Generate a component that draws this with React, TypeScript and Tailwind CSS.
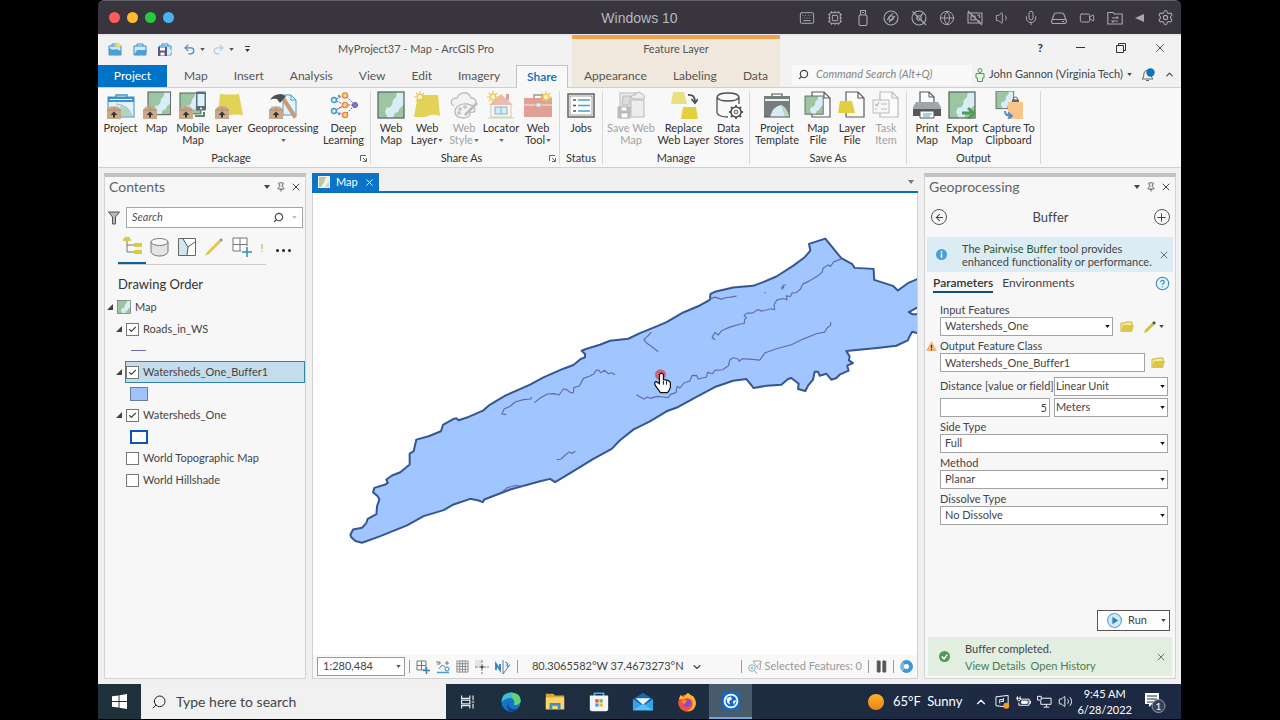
import { ReactNode, useState } from "react";
import {
    ArrowLeft, Check, ChevronDown, ChevronUp, CircleHelp, Cpu, Globe, Keyboard,
    Mic, Pause, Pin, Plus, Search, Settings, Undo2, Redo2, Video, Volume1, Volume2, X,
} from "lucide-react";

const Caret = (props: { className?: string, small?: boolean }) => (
    <svg viewBox="0 0 6 4" className={`shrink-0 ${props.small ? "w-[5px] h-[3px]" : "w-[6px] h-[4px]"} ${props.className ?? "text-[#444]"}`}>
        <path d="M0 0h6L3 4z" fill="currentColor" />
    </svg>
)

/* ---------- ribbon drawings, all on a 28 unit grid ---------- */

const MapArt = (props: { x?: number, y?: number, s?: number }) => (
    <g transform={`translate(${props.x ?? 1} ${props.y ?? 1}) scale(${props.s ?? 1})`}>
        <rect width="26" height="26" fill="#d9edf7" />
        <path d="M0 0H19L18 5L15 8L14 13L11 16L9 15L7 20L10 26H0Z" fill="#9cc5a1" />
        <path d="M26 13V26H15L17 21L20 20L22 16Z" fill="#9cc5a1" />
        <rect width="26" height="26" fill="none" stroke="#5c6b66" strokeWidth="1.3" />
    </g>
)

const Box = () => (
    <g>
        <path d="M0 19L3 15.500H11L14 19V28H0Z" fill="#c9a98a" />
        <path d="M0 19H14M7 15.500V19" stroke="#a98662" strokeWidth=".8" />
        <path d="M7 20.500L10.300 24H8V26.500H6V24H3.700Z" fill="#333" />
    </g>
)

const Page = (props: { x: number, color?: string }) => (
    <path d={`M${props.x} 1H${props.x + 12}L${props.x + 18} 7V26H${props.x}ZM${props.x + 12} 1V7H${props.x + 18}`} fill="#fbfbfb" stroke={props.color ?? "#5d5d5d"} strokeWidth="1.200" />
)

const Sun = (props: { x: number, y: number }) => (
    <g transform={`translate(${props.x} ${props.y})`} stroke="#e8c95c" strokeWidth="1.200">
        <path d="M0 -6V6M-6 0H6M-4.200 -4.200L4.200 4.200M-4.200 4.200L4.200 -4.200" />
        <circle r="2.800" fill="#fdf3bf" />
    </g>
)

const art: Record<string, ReactNode> = {
    project: <>
        <path d="M9 6V4H20V6" fill="none" stroke="#4a90c2" strokeWidth="1.500" />
        <rect x="1" y="6" width="26" height="20" fill="#e4f3fa" stroke="#3c8fc6" />
        <path d="M1 6H27V11H1Z" fill="#3e92ca" /><path d="M3 8.500H25" stroke="#fff" />
        <path d="M13 15Q21 16 24 25H14Z" fill="#b5d6b5" /><path d="M9 13Q21 14 25 25" fill="none" stroke="#9cc9e0" strokeWidth="1.500" />
        <Box />
    </>,
    map: <><MapArt x={5} y={1} s={0.87} /><Box /></>,
    mobile: <>
        <MapArt x={1} y={2} s={0.8} /><path d="M16 25H25V21" fill="none" stroke="#5c8a61" strokeWidth="2" />
        <rect x="17" y="0.500" width="10" height="19" rx="1" fill="#5d6c79" /><rect x="18.500" y="3" width="7" height="12" fill="#dff1fb" />
        <circle cx="22" cy="17.500" r="1" fill="#fff" /><Box />
    </>,
    layer: <><path d="M5 3Q15 4 24 3L28 24Q22 23 16 24H3Z" fill="#e2d257" /><Box /></>,
    geo: <>
        <path d="M14 4H22L27 9V24H14ZM22 4V9H27" fill="#e2f3fb" stroke="#4b9bcb" />
        <path d="M12 8L15 5L28 25L25 28Z" fill="#c89b78" />
        <path d="M1 9Q4 3 12 3L17 5L11 12L8 8Q4 7 1 9Z" fill="#4b4f52" /><Box />
    </>,
    deep: <>
        <g stroke="#7560b5" strokeWidth="1" fill="none"><path d="M4 9L15 4L25 14L15 24L4 20L15 14L4 9M15 14H25M4 20L15 14" strokeDasharray="2 1" /></g>
        <g fill="#d3eef7" stroke="#3e9cc5" strokeWidth="1.400"><circle cx="4" cy="9" r="2.500" /><circle cx="4" cy="20" r="2.500" /></g>
        <g fill="#fbd089" stroke="#e7893c" strokeWidth="1.400"><circle cx="15" cy="4.500" r="2.600" /><circle cx="15" cy="14" r="2.600" /><circle cx="15" cy="24" r="2.600" /></g>
        <circle cx="25" cy="14" r="2.500" fill="#8d72cf" stroke="#6e4fb0" />
        <circle cx="9" cy="5" r="1" fill="#4f61a5" /><circle cx="9" cy="23" r="1" fill="#4f61a5" />
    </>,
    webMap: <MapArt />,
    webLayer: <><path d="M5 4H25L27 25Q20 22 12 26H1Z" fill="#e2d257" /><Sun x={7} y={6} /></>,
    webStyle: <g fill="#f3f3f3" stroke="#bcbcbc" strokeWidth="1.300">
        <path d="M4 15Q-1 12 3 8Q6 7 7 7Q9 1 16 2Q20 3 21 7Q27 7 26 13L24 15" />
        <path d="M5 19Q8 12 17 13Q26 15 25 20Q23 22 20 21Q21 26 14 27Q4 27 5 19Z" /><path d="M27 12L15 24" strokeWidth="2.500" />
        <circle cx="10" cy="18" r="1.200" /><circle cx="15" cy="16" r="1.200" /><circle cx="9" cy="22" r="1.200" />
    </g>,
    locator: <>
        <path d="M19 3H22V9H19Z" fill="#d8a294" /><rect x="4" y="13" width="20" height="13" fill="#fdf6ee" stroke="#d6c6b8" />
        <path d="M2 14L14 3L26 14Z" fill="#ebbcae" /><rect x="8" y="16" width="12" height="7" fill="#d5edf7" stroke="#7fb5cc" /><path d="M14 16V23" stroke="#7fb5cc" />
        <path d="M1 27H27" stroke="#b8d8b0" /><Sun x={6} y={6} />
    </>,
    webTool: <>
        <path d="M10 7V4H18V7" fill="none" stroke="#999" strokeWidth="1.500" /><rect y="7" width="28" height="19" fill="#dfa196" />
        <path d="M0 14H28" stroke="#efd2cc" strokeWidth="1.500" /><rect x="12" y="12" width="5" height="4" fill="#eee" stroke="#aaa" strokeWidth=".8" /><Sun x={22} y={6} />
    </>,
    jobs: <>
        <rect x="1" y="3" width="26" height="23" fill="#fff" stroke="#565656" strokeWidth="1.400" /><rect x="3" y="5" width="22" height="19" fill="none" stroke="#888" strokeWidth=".8" />
        <path d="M6 9H9M6 14.500H9M6 20H9" stroke="#555" strokeWidth="1.500" /><path d="M11 9H23M11 14.500H23M11 20H23" stroke="#48a0d2" strokeWidth="1.500" />
    </>,
    saveWeb: <g fill="#ededed" stroke="#b9b9b9">
        <rect x="3" y="2" width="18" height="19" /><path d="M14 9H27V26H14Z" /><path d="M16 8Q12 4 18 4Q21 -1 25 3Q29 4 27 8Z" />
        <path d="M6 5H14L12 14H5Z" fill="#dcdcdc" /><rect x="1" y="16" width="12" height="11" fill="#bbb" /><rect x="4" y="16" width="6" height="4" fill="#fff" /><rect x="4" y="22" width="7" height="5" fill="#fff" />
    </g>,
    replace: <>
        <path d="M3 1H14L17 13H1Z" fill="#e9e083" /><path d="M13 16H26L28 28H11Z" fill="#e2d03f" />
        <path d="M18 4Q25 3 25 11M21.500 8L25 12L28 8" fill="none" stroke="#4a5258" strokeWidth="1.800" />
    </>,
    stores: <>
        <path d="M2 6V22Q4 26 13 26M24 6V13M2 6Q3 2 13 2T24 6Q23 10 13 10T2 6" fill="none" stroke="#505050" strokeWidth="1.300" />
        <circle cx="21" cy="21" r="5" fill="#f8f8f8" stroke="#505050" strokeWidth="1.500" /><circle cx="21" cy="21" r="1.800" fill="none" stroke="#505050" />
        <path d="M21 14V16M21 26V28M14 21H16M26 21H28M16 16L17.500 17.500M24.500 24.500L26 26M26 16L24.500 17.500M17.500 24.500L16 26" stroke="#505050" strokeWidth="1.800" />
    </>,
    template: <>
        <path d="M9 5V3H19V5" fill="none" stroke="#555" strokeWidth="1.200" /><rect x="1" y="5" width="26" height="21" fill="#777c7e" /><path d="M2 9H26" stroke="#f0f0f0" strokeWidth="2" />
        <path d="M7 26Q10 15 18 14Q24 16 26 26Z" fill="#d6edf7" /><path d="M18 14Q24 17 26 26H22Z" fill="#b9dab1" /><path d="M1 26H27" stroke="#555" />
    </>,
    mapFile: <><Page x={8} /><MapArt x={1} y={5} s={0.7} /></>,
    layerFile: <><Page x={8} /><path d="M2 10H14L17 22H0Z" fill="#e2cf3c" /></>,
    task: <><Page x={8} color="#bbb" /><rect x="1" y="9" width="16" height="13" fill="#f6f6f6" stroke="#bbb" /><path d="M3 13L5 15L7 11M9 13H15M3 18H5M9 18H15" fill="none" stroke="#bbb" strokeWidth="1.200" /></>,
    print: <>
        <path d="M7 13V1H16L21 6V13" fill="#fff" stroke="#555" strokeWidth="1.200" /><path d="M16 1V6H21" fill="none" stroke="#555" />
        <path d="M3 11H25L28 16V18H0V16Z" fill="#a2a5a7" /><rect y="18" width="28" height="7" fill="#55595b" />
        <path d="M7 20H21V27H7Z" fill="#fff" stroke="#555" /><path d="M10 23H19M10 25H17" stroke="#48a0d2" />
    </>,
    exportMap: <><MapArt /><path d="M14 22H23M20 17L26 22.500L20 28" fill="none" stroke="#4d9d55" strokeWidth="2.800" /></>,
    capture: <>
        <MapArt x={1} y={0} s={0.68} /><rect x="13" y="11" width="15" height="17" fill="#f9c58d" />
        <path d="M17 11V8.500H24V11Z" fill="#666" /><circle cx="20.500" cy="8" r="2" fill="none" stroke="#666" />
        <path d="M10 20Q10 25 16 25M13 21.500L17 25L13 28" fill="none" stroke="#3f8fd0" strokeWidth="1.800" />
    </>,
}

type Tool = { icon: string, label: string[], width: string, caret?: "inline" | "below", off?: boolean }

const groups: { name: string, pad: string, launcher?: boolean, tools: Tool[] }[] = [
    { name: "Package", pad: "pl-[4px] pr-[3px]", launcher: true, tools: [
        { icon: "project", label: ["Project"], width: "w-[37px]" },
        { icon: "map", label: ["Map"], width: "w-[35px]" },
        { icon: "mobile", label: ["Mobile", "Map"], width: "w-[38px]" },
        { icon: "layer", label: ["Layer"], width: "w-[34px]" },
        { icon: "geo", label: ["Geoprocessing"], width: "w-[74px]", caret: "below" },
        { icon: "deep", label: ["Deep", "Learning"], width: "w-[47px]" },
    ] },
    { name: "Share As", pad: "px-[3px]", launcher: true, tools: [
        { icon: "webMap", label: ["Web", "Map"], width: "w-[34px]" },
        { icon: "webLayer", label: ["Web", "Layer"], width: "w-[38px]", caret: "inline" },
        { icon: "webStyle", label: ["Web", "Style"], width: "w-[36px]", caret: "inline", off: true },
        { icon: "locator", label: ["Locator"], width: "w-[38px]", caret: "below" },
        { icon: "webTool", label: ["Web", "Tool"], width: "w-[36px]", caret: "inline" },
    ] },
    { name: "Status", pad: "px-[3px]", tools: [{ icon: "jobs", label: ["Jobs"], width: "w-[36px]" }] },
    { name: "Manage", pad: "px-[3px]", tools: [
        { icon: "saveWeb", label: ["Save Web", "Map"], width: "w-[50px]", off: true },
        { icon: "replace", label: ["Replace", "Web Layer"], width: "w-[55px]" },
        { icon: "stores", label: ["Data", "Stores"], width: "w-[35px]" },
    ] },
    { name: "Save As", pad: "px-[3px]", tools: [
        { icon: "template", label: ["Project", "Template"], width: "w-[48px]" },
        { icon: "mapFile", label: ["Map", "File"], width: "w-[34px]" },
        { icon: "layerFile", label: ["Layer", "File"], width: "w-[34px]" },
        { icon: "task", label: ["Task", "Item"], width: "w-[34px]", off: true },
    ] },
    { name: "Output", pad: "px-[3px]", tools: [
        { icon: "print", label: ["Print", "Map"], width: "w-[34px]" },
        { icon: "exportMap", label: ["Export", "Map"], width: "w-[36px]" },
        { icon: "capture", label: ["Capture To", "Clipboard"], width: "w-[57px]" },
    ] },
]

const Ribbon = () => (
    <div className="flex h-[81px] shrink-0 border-y border-[#cfcfcf] bg-[#f8f8f8] text-[11px] text-[#333]">
        {groups.map(g => (
            <section key={g.name} aria-label={g.name} className={`flex flex-col justify-between border-r border-[#d8d8d8] my-[3px] ${g.pad}`}>
                <div className="flex">
                    {g.tools.map(tool => (
                        <button key={tool.icon} className={`flex flex-col items-center leading-[12px] whitespace-nowrap ${tool.width} ${tool.off ? "text-[#a3a3a3]" : ""}`}>
                            <svg viewBox="0 0 28 28" className="size-[28px] shrink-0 mb-[3px]">{art[tool.icon]}</svg>
                            {tool.label.map((line, i) => (
                                <span key={line} className="flex items-center gap-[1px]">
                                    {line}
                                    {tool.caret === "inline" && i === 1 && <Caret small className="text-[#666]" />}
                                </span>
                            ))}
                            {tool.caret === "below" && <Caret small className="text-[#666] mt-[5px]" />}
                        </button>
                    ))}
                </div>
                <div className="flex items-center leading-[12px]">
                    <span className="flex-1 text-center">{g.name}</span>
                    {g.launcher && <svg viewBox="0 0 7 7" className="size-[7px]"><path d="M.5 6V.5H6M3 3L6 6M6.500 3V6.500H3" fill="none" stroke="#666" /></svg>}
                </div>
            </section>
        ))}
    </div>
)

/* ---------- window chrome ---------- */

const Line = (props: { children: ReactNode }) => (
    <svg viewBox="0 0 16 16" className="size-[16px]" fill="none" stroke="currentColor" strokeWidth="1.100">{props.children}</svg>
)

const vmIcons: { n: string, icon: ReactNode }[] = [
    { n: "Keyboard", icon: <Keyboard size={16} strokeWidth={1.500} /> },
    { n: "Processor", icon: <Cpu size={16} strokeWidth={1.500} /> },
    { n: "USB", icon: <Line><rect x="4" y="5" width="8" height="10.500" rx="1.500" /><path d="M5.500 5V.5H10.500V5M7 2.500H9" /></Line> },
    { n: "Disc", icon: <Line><circle cx="8" cy="8" r="7" /><circle cx="8" cy="8" r="2.200" /><path d="M4 10L10 3M6 12L12 6" /></Line> },
    { n: "Second disc", icon: <Line><circle cx="8" cy="8" r="7" /><circle cx="8" cy="8" r="2.200" /><path d="M1.500 1.500L15 15M9.500 6L12 3.500" /></Line> },
    { n: "Network", icon: <Globe size={16} strokeWidth={1.500} /> },
    { n: "Display", icon: <Line><path d="M1 3H15V13H1ZM4 6H8V10H4ZM10 5H12.500V8M10 11H13M1 1L15 15" /></Line> },
    { n: "Sound", icon: <Volume1 size={16} strokeWidth={1.500} /> },
    { n: "Microphone", icon: <Mic size={16} strokeWidth={1.500} /> },
    { n: "Hard disk", icon: <Line><path d="M1 10L3 4.500Q3.500 3 5 3H11Q12.500 3 13 4.500L15 10M2 9.500H14Q15.500 9.500 15.500 11T14 13.500H2Q.5 13.500 .5 11.500T2 9.500ZM11 11.500H13" /></Line> },
    { n: "Camera", icon: <Video size={16} strokeWidth={1.500} /> },
    { n: "Shared folders", icon: <Line><path d="M.8 2.500H6L7.500 4H15.200V14H.8ZM5 8H11L9.500 6.500M11 11H5L6.500 12.500" /></Line> },
]

const TitleBar = () => (
    <div className="grid grid-cols-[1fr_auto_1fr] items-center h-[34px] shrink-0 rounded-t-[6px] bg-[#38353f] border-t border-[#65636a] px-[11px]">
        <div className="flex gap-[7px]">
            <button aria-label="Close" className="size-[11px] rounded-full bg-[#fc5d57]" />
            <button aria-label="Minimize" className="size-[11px] rounded-full bg-[#fdbc2e]" />
            <button aria-label="Zoom" className="size-[11px] rounded-full bg-[#28c840]" />
            <button aria-label="Unity" className="size-[11px] rounded-full bg-[#4bb2ef]" />
        </div>
        <h1 className="font-['Liberation_Sans',sans-serif] text-[14px] leading-[18px] text-[#b9b7be]">Windows 10</h1>
        <div className="flex justify-end items-center gap-[12px] -mr-[4px] text-[#aaa8af]">
            {vmIcons.map(v => <button key={v.n} aria-label={v.n}>{v.icon}</button>)}
            <svg viewBox="0 0 10 10" className="size-[10px]"><path d="M9 1V9L0 5Z" fill="currentColor" /></svg>
            <button aria-label="Settings"><Settings size={17} strokeWidth={1.500} /></button>
        </div>
    </div>
)

const Case = (props: { sun?: boolean, disk?: boolean }) => (
    <svg viewBox="0 0 14 14" className="size-[14px]">
        <path d="M4 4V2H10V4" fill="none" stroke="#3e8fc4" /><path d="M1 4H13V13H1Z" fill="#cfe8f6" stroke="#3e8fc4" />
        <path d={props.sun ? "M1 12V6Q5 9 8 7L13 9V13H1Z" : "M1 13L4 8H14L12 13Z"} fill={props.disk ? "#d7ebf5" : "#4a9fd4"} />
        {props.sun && <circle cx="10" cy="3.500" r="2.500" fill="#e9df65" />}
        {props.disk && <><rect y="5" width="9" height="9" fill="#5d5488" /><rect x="2" y="5.500" width="5" height="3" fill="#fff" /><rect x="2.500" y="10.500" width="4" height="3" fill="#fff" /></>}
    </svg>
)

const Header = () => (
    <header className="flex h-[53px] shrink-0 bg-[#f2f2f2] border-t-2 border-[#e9e9e9] text-[#555] text-[12px]">
        <div className="flex flex-col w-[474px] shrink-0">
            <div className="flex items-center flex-1 pl-[10px] pb-[2px]">
                <div className="flex items-center gap-[11px] w-[230px] shrink-0">
                    <button aria-label="New project"><Case sun /></button>
                    <button aria-label="Open project"><Case /></button>
                    <button aria-label="Save project"><Case disk /></button>
                    <button aria-label="Undo" className="flex items-center gap-[4px] text-[#3a8cc4]"><Undo2 size={13} strokeWidth={2.200} /><Caret small className="text-[#555]" /></button>
                    <button aria-label="Redo" className="flex items-center gap-[4px] text-[#a9cde2] -ml-[4px]"><Redo2 size={13} strokeWidth={2.200} /><Caret small className="text-[#555]" /></button>
                    <button aria-label="Customize toolbar" className="flex flex-col items-center gap-[2px]"><span className="w-[5px] h-[1px] bg-[#333]" /><Caret small className="text-[#333]" /></button>
                </div>
                <span className="text-[11px] whitespace-nowrap">MyProject37 - Map - ArcGIS Pro</span>
            </div>
            <nav className="flex h-[23px] items-end">
                <button className="h-[22px] w-[69px] bg-[#0173c7] text-white">Project</button>
                {["Map", "Insert", "Analysis", "View", "Edit", "Imagery"].map((tab, i) => (
                    <button key={tab} className={`h-[22px] px-[13px] ${i === 0 ? "ml-[4px]" : ""}`}>{tab}</button>
                ))}
                <button className="h-[23px] w-[52px] ml-auto mr-[4px] -mb-[1px] relative bg-[#f8f8f8] border border-b-0 border-[#c3c3c3] text-[#0c69b0] font-semibold">Share</button>
            </nav>
        </div>
        <div className="flex flex-col w-[208px] shrink-0 -mt-[1px] bg-[#f0e8dc] border-t-4 border-[#f3a04c]">
            <div className="flex-1 flex items-center justify-center pb-[5px] text-[11px]">Feature Layer</div>
            <nav className="flex h-[22px] justify-between px-[12px]">
                <button>Appearance</button><button>Labeling</button><button>Data</button>
            </nav>
        </div>
        <div className="flex flex-col flex-1 min-w-0">
            <div className="flex items-center justify-end gap-[27px] flex-1 pr-[14px] pb-[3px] text-[#333]">
                <button aria-label="Help" className="font-bold mr-[6px]">?</button>
                <button aria-label="Minimize window" className="w-[9px] h-[1px] bg-[#333]" />
                <button aria-label="Restore window" className="ml-[4px]">
                    <svg viewBox="0 0 10 10" className="size-[10px]"><path d="M.5 2.500H7.500V9.500H.5ZM2.500 2.500V.5H9.500V7.500H7.500" fill="none" stroke="#333" /></svg>
                </button>
                <button aria-label="Close window"><X size={14} strokeWidth={1.500} /></button>
            </div>
            <div className="flex h-[25px] items-center pl-[12px] pr-[6px] text-[11px] text-[#444]">
                <label className="flex items-center gap-[7px] h-[20px] w-[180px] px-[6px] bg-[#f9f9f9]">
                    <Search size={11} strokeWidth={2.500} className="-scale-x-100 shrink-0" />
                    <input placeholder="Command Search (Alt+Q)" className="w-full min-w-0 italic outline-none placeholder:text-[#858585]" />
                </label>
                <button className="flex items-center gap-[4px] ml-auto whitespace-nowrap">
                    <svg viewBox="0 0 10 14" className="w-[10px] h-[14px]" fill="#e3f3e1" stroke="#4f9c4f"><circle cx="5" cy="2.500" r="2" /><path d="M1 5.500H9V10H7.500V13.500H2.500V10H1Z" /></svg>
                    John Gannon (Virginia Tech)<Caret small />
                </button>
                <button aria-label="Notifications" className="ml-[9px]">
                    <svg viewBox="0 0 14 14" className="size-[14px]"><path d="M1 11Q3 10 3 5Q4 2 7 2Q10 3 10 8Q11 10 12 11ZM5 12.500H8" fill="none" stroke="#666" /><circle cx="9.500" cy="4.500" r="4.200" fill="#0a76bd" /></svg>
                </button>
                <button aria-label="Collapse ribbon" className="ml-[9px]"><ChevronUp size={11} strokeWidth={2.500} /></button>
            </div>
        </div>
    </header>
)

const PaneHead = (props: { title: string }) => (
    <div className="flex items-center h-[20px] pl-[4px] pr-[3px] text-[#444]">
        <h2 className="flex-1 text-[14px] leading-[20px] text-[#5d6468]">{props.title}</h2>
        <button aria-label={`${props.title} options`} className="mr-[6px]"><Caret /></button>
        <button aria-label={`Pin ${props.title}`} className="mr-[4px]"><Pin size={10} strokeWidth={2} /></button>
        <button aria-label={`Close ${props.title}`}><X size={12} strokeWidth={2} /></button>
    </div>
)

/* ---------- contents pane ---------- */

const Tick = (props: { label: string, on?: boolean }) => {
    const [on, setOn] = useState(!!props.on)
    return (
        <label className="flex items-center gap-[4px]">
            <span className="grid place-items-center text-[#444]">
                <input type="checkbox" checked={on} onChange={() => setOn(!on)} className="appearance-none size-[13px] border border-[#777] bg-white col-start-1 row-start-1" />
                {on && <Check size={9} strokeWidth={3} className="col-start-1 row-start-1 pointer-events-none" />}
            </span>
            {props.label}
        </label>
    )
}

const Expander = () => <svg viewBox="0 0 6 6" className="size-[6px] shrink-0"><path d="M6 0V6H0Z" fill="#444" /></svg>

const SmallMap = () => <svg viewBox="0 0 28 28" className="size-[14px]"><MapArt /></svg>

const Contents = () => (
    <aside className="flex flex-col w-[202px] shrink-0 border border-[#d3d3d3] border-t-4 border-t-[#c2c2c2] bg-[#f7f7f7] text-[11px] text-[#444]">
        <PaneHead title="Contents" />
        <div className="flex items-center gap-[6px] mt-[10px] pl-[3px] pr-[2px]">
            <svg viewBox="0 0 12 14" className="w-[12px] h-[14px] shrink-0"><path d="M.5 1H11.500L7.500 6V13H4.500V6Z" fill="#b9b9b9" stroke="#555" /></svg>
            <label className="flex items-center flex-1 h-[21px] px-[5px] border border-[#a5a5a5] bg-white">
                <input placeholder="Search" aria-label="Search contents" className="flex-1 min-w-0 italic outline-none placeholder:text-[#555]" />
                <Search size={11} strokeWidth={2.500} className="-scale-x-100 mr-[8px]" />
                <Caret small className="text-[#bbb]" />
            </label>
        </div>
        <div className="flex items-center mt-[8px] ml-[13px] h-[29px]">
            <div className="flex items-center h-full w-[148px] gap-[9px] border-b border-[#ccc] overflow-hidden *:pb-[6px]">
                <button aria-label="List by drawing order" className="w-[28px] h-full grid place-items-center border-b-2 border-[#0b639c] shrink-0">
                    <svg viewBox="0 0 20 20" className="size-[20px]"><path d="M5 4V16H13M5 9H13" fill="none" stroke="#777" /><path d="M2 1H8V3H9V5H1V3H2ZM12 7H20V11H12ZM12 14H20V18H12Z" fill="#ddc943" /></svg>
                </button>
                <button aria-label="List by data source" className="-ml-[5px]"><svg viewBox="0 0 19 20" className="w-[19px] h-[20px]" fill="#e4e4e4" stroke="#777"><path d="M1 5V15Q3 19 9.500 19T18 15V5" /><ellipse cx="9.500" cy="5" rx="8.500" ry="3.500" fill="#f7f7f7" /></svg></button>
                <button aria-label="List by selection"><svg viewBox="0 0 18 18" className="size-[18px]"><path d="M.5.5H17.500V17.500H.5Z" fill="#fff" stroke="#666" /><path d="M1 1H6L10 9L9 17H1Z" fill="#cfe6f3" /><path d="M5 1L10 9L17 4M10 9L9 17" fill="none" stroke="#555" /></svg></button>
                <button aria-label="List by editing"><svg viewBox="0 0 18 18" className="size-[18px]"><path d="M0 18L2 14L14 2L16 4L4 16Z" fill="#e3c64a" /><path d="M14 2L16 0L18 2L16 4Z" fill="#999" /></svg></button>
                <button aria-label="List by snapping"><svg viewBox="0 0 20 20" className="size-[20px]"><path d="M1 1H15V14H1ZM8 1V14M1 7.500H15" fill="#fff" stroke="#777" /><path d="M14 9V20M9 14.500H20" stroke="#f7f7f7" strokeWidth="4" /><path d="M15 10V20M10 15H20" stroke="#2e8ebb" strokeWidth="1.500" /></svg></button>
                <svg viewBox="0 0 2 10" className="w-[2px] h-[16px] shrink-0"><path d="M1 2V7M1 8.500V10" stroke="#c79a3e" /></svg>
            </div>
            <button aria-label="More" className="flex gap-[3px] ml-[10px]"><i className="size-[3px] rounded-full bg-[#222]" /><i className="size-[3px] rounded-full bg-[#222]" /><i className="size-[3px] rounded-full bg-[#222]" /></button>
        </div>
        <h3 className="mt-[10px] ml-[13px] mb-[3px] text-[13px] leading-[18px] text-[#333]">Drawing Order</h3>
        <ul>
            <li className="flex items-center gap-[4px] h-[22px] pl-[2px]"><Expander /><SmallMap />Map</li>
            <li className="flex items-center gap-[4px] h-[22px] pl-[11px]"><Expander /><Tick label="Roads_in_WS" on /></li>
            <li className="flex items-center h-[21px] pl-[26px]"><span className="w-[15px] h-[1px] bg-[#6f6aa8]" /></li>
            <li className="flex items-center gap-[3px] h-[22px] pl-[11px]"><Expander />
                <div className="flex items-center flex-1 h-[22px] border border-[#2f86ad] bg-[#c5dcec]"><Tick label="Watersheds_One_Buffer1" on /></div>
            </li>
            <li className="flex items-center h-[21px] pl-[25px]"><span className="w-[18px] h-[14px] bg-[#a0c3fb] border border-[#6c7d99]" /></li>
            <li className="flex items-center gap-[4px] h-[22px] pl-[11px]"><Expander /><Tick label="Watersheds_One" on /></li>
            <li className="flex items-center h-[21px] pl-[25px]"><span className="w-[18px] h-[14px] bg-white border-2 border-[#0f52c1]" /></li>
            <li className="flex items-center h-[22px] pl-[21px]"><Tick label="World Topographic Map" /></li>
            <li className="flex items-center h-[22px] pl-[21px]"><Tick label="World Hillshade" /></li>
        </ul>
    </aside>
)

/* ---------- map view ---------- */

const watershed = "120,1095 128,1080 155,1075 168,1060 172,1048 198,1034 200,1010 207,990 202,980 188,968 192,955 225,945 232,940 228,930 245,918 270,908 298,885 298,852 310,845 318,810 355,800 392,785 398,766 430,748 438,746 445,752 475,742 520,722 535,708 585,678 660,645 700,623 760,597 790,586 812,568 825,563 825,553 815,543 830,537 870,525 900,513 955,507 990,490 1040,470 1070,457 1120,428 1170,407 1200,390 1202,372 1215,366 1270,353 1330,348 1360,337 1400,320 1450,288 1485,262 1502,242 1498,222 1547,206 1595,265 1628,283 1635,294 1692,297 1694,330 1750,348 1765,362 1795,340 1825,327 1860,320 1860,405 1825,412 1798,427 1808,433 1860,434 1860,490 1823,490 1808,486 1800,500 1795,512 1760,528 1710,534 1610,544 1620,560 1618,572 1630,580 1613,588 1617,603 1590,615 1580,625 1565,630 1550,612 1530,618 1525,606 1515,606 1510,630 1495,648 1487,664 1465,658 1467,642 1445,625 1435,628 1415,645 1370,648 1332,655 1310,628 1270,633 1215,652 1160,682 1105,712 1070,725 1020,755 970,780 930,812 905,838 850,868 790,905 735,938 720,928 690,935 600,960 522,990 518,998 505,993 480,988 430,1005 400,1022 340,1040 290,1068 210,1100 155,1120 135,1115 122,1103"

const roads = [
    "588,735 575,733 582,718 600,710 615,697 640,690 662,688 665,682",
    "673,699 690,685 712,673 732,672 747,676 760,658 768,659 780,668 790,670 792,653 808,649 820,626 840,619 852,612 858,602 866,601 872,609 884,602 895,612 905,609 915,615",
    "740,870 752,869 765,857 778,847 785,852 796,845",
    "1024,487 1013,499 1002,509 1008,518 1030,534 1045,546",
    "1200,388 1215,382 1235,388 1250,383 1262,382 1280,379",
    "1216,510 1207,503 1215,488 1225,496 1235,483 1260,472 1295,462 1303,462 1305,448 1310,444 1303,436 1312,430 1328,430 1345,419 1355,424 1385,417 1395,420 1393,404 1402,390 1420,386 1432,390 1430,378 1442,380 1447,370 1460,368 1472,358 1480,342 1500,333 1525,318 1538,306 1540,295 1556,285 1562,290 1572,276 1595,267",
    "1417,360 1416,352 1422,354 1420,347 1428,345",
    "1365,367 1368,370",
    "980,675 990,682 1002,688 1012,682 1022,686 1040,680 1060,682 1075,684 1082,674 1098,669 1102,650 1110,655 1122,640 1140,634 1146,618 1160,617 1165,628 1190,622 1193,608 1208,612 1215,602 1238,600 1256,588 1260,570 1270,564 1285,568 1288,575 1297,567 1320,568 1350,571 1365,550 1400,537 1445,525 1480,508 1520,492 1545,487 1552,475 1563,466 1563,457",
    "575,968 590,955 615,948 640,950",
]

const MapCanvas = () => (
    <svg viewBox="313 193 605 463" preserveAspectRatio="xMidYMid slice" className="flex-1 min-h-0 w-full bg-[#fefefe]">
        <g transform="translate(310.500 170) scale(.33333)" strokeLinejoin="round">
            <polygon points={watershed} fill="#a1c5ff" stroke="#35568f" strokeWidth="6" />
            {roads.map(r => <polyline key={r} points={r} fill="none" stroke="#6369b4" strokeWidth="3.500" />)}
        </g>
        <circle cx="661" cy="375" r="5.500" fill="#d94b52" opacity=".8" />
        <path d="M660 375Q662 372 664 375V380Q669 380 671 383V388Q670 391 668 393H661L656 386Q654 382 657 382L660 384Z" fill="#fff" stroke="#111" strokeWidth="1.200" />
        <path d="M664 381V385M667 381.500V385" stroke="#111" />
    </svg>
)

const MapView = () => (
    <main className="flex flex-col flex-1 min-w-0 text-[11px]">
        <div className="flex justify-between items-center h-[20px] shrink-0 border-b-2 border-[#0871bb]">
            <div className="flex items-center gap-[6px] h-[18px] pl-[6px] pr-[4px] bg-[#0b74c4] text-white">
                <svg viewBox="0 0 12 12" className="size-[12px]"><rect width="12" height="12" fill="#f4f2e8" /><path d="M1 1H8L6 6L3 11H1Z" fill="#bcc8a4" /><path d="M11 5V11H7Z" fill="#c9d8dd" /></svg>
                Map
                <button aria-label="Close Map"><X size={11} strokeWidth={2} /></button>
            </div>
            <button aria-label="View list" className="mr-[4px]"><Caret className="text-[#777]" /></button>
        </div>
        <div className="flex flex-col flex-1 min-h-0 border border-t-0 border-[#d0d0d0]">
            <MapCanvas />
            <div className="flex items-center h-[23px] shrink-0 px-[4px] bg-[#f8f8f8] text-[#444]">
                <div className="grid items-center w-[88px] shrink-0">
                    <select aria-label="Scale" className="appearance-none col-start-1 row-start-1 h-[19px] w-full pl-[5px] border border-[#999] bg-white"><option>1:280,484</option></select>
                    <Caret small className="text-[#555] col-start-1 row-start-1 justify-self-end mr-[4px] pointer-events-none" />
                </div>
                <div className="flex items-center gap-[6px] h-[13px] ml-[4px] px-[6px] border-x border-[#999]">
                    <button aria-label="Add grid"><svg viewBox="0 0 14 14" className="size-[14px]"><path d="M1 1H10V10H1ZM5.500 1V10M1 5.500H10" fill="none" stroke="#777" /><path d="M10.500 7V14M7 10.500H14" stroke="#2e83b8" strokeWidth="1.500" /></svg></button>
                    <button aria-label="Snapping"><svg viewBox="0 0 14 14" className="size-[14px]" fill="none"><path d="M0 2H4V4H1M3 9L6 5L9 7M11 1V5M9 3H13" stroke="#777" /><path d="M1 12.500H13" stroke="#4a9fd0" strokeWidth="1.500" /><circle cx="11" cy="9" r="2" stroke="#2e83b8" /></svg></button>
                    <button aria-label="Grid"><svg viewBox="0 0 14 14" className="size-[13px]"><path d="M1 1H13V13H1ZM4 1V13M7 1V13M10 1V13M1 4H13M1 7H13M1 10H13" fill="none" stroke="#888" /></svg></button>
                    <button aria-label="Constraints"><svg viewBox="0 0 14 14" className="size-[14px]"><rect width="6" height="6" fill="#dcecd8" /><path d="M7 0V14M0 7H14" stroke="#777" strokeDasharray="3 1" /><circle cx="7" cy="7" r="1.500" fill="#555" /></svg></button>
                    <button aria-label="North correction"><svg viewBox="0 0 16 14" className="w-[16px] h-[14px]" fill="none"><path d="M1 10V4L5 10V4" stroke="#2b83c4" strokeWidth="1.800" /><path d="M8 0V14L14 6" stroke="#777" /><path d="M10 2Q13 2 13 6M11 4.500L13 7L15 4.500" stroke="#2b83c4" /></svg></button>
                </div>
                <div className="flex-1 flex items-center justify-end gap-[7px] pr-[38px] whitespace-nowrap">80.3065582°W 37.4673273°N<ChevronDown size={12} strokeWidth={2.200} /></div>
                <div className="flex items-center gap-[6px] h-[13px] pl-[6px] border-l border-[#999] text-[#999] whitespace-nowrap">
                    <svg viewBox="0 0 14 14" className="size-[14px]" fill="none" stroke="#aaa"><path d="M5 1H13L12 10L9 7M5 1L9 7L13 2" /><circle cx="4" cy="8" r="3.300" stroke="#8ab0c4" /><path d="M7 11L9 14M2.500 8H5.500M4 6.500V9.500" stroke="#8ab0c4" /></svg>
                    <span className="-ml-[3px]">Selected Features: 0</span>
                    <button aria-label="Pause drawing" className="flex items-center justify-center w-[26px] h-[13px] border-x border-[#999] text-[#555]"><Pause size={15} fill="currentColor" strokeWidth={1} /></button>
                    <button aria-label="Refresh" className="size-[13px] rounded-full border-[4px] border-[#3f97d3] border-l-[#74b8e4] bg-white" />
                </div>
            </div>
        </div>
    </main>
)

/* ---------- geoprocessing pane ---------- */

const Combo = (props: { id?: string, value: string, name?: string, tight?: boolean }) => (
    <div className="grid items-center flex-1 min-w-0">
        <select id={props.id} aria-label={props.name} className={`appearance-none col-start-1 row-start-1 h-[19px] w-full border border-[#a3a3a3] bg-white ${props.tight ? "pl-[1px]" : "pl-[4px]"}`}>
            <option>{props.value}</option>
        </select>
        <Caret small className="text-[#111] col-start-1 row-start-1 justify-self-end mr-[3px] pointer-events-none" />
    </div>
)

const Folder = () => <svg viewBox="0 0 14 12" className="w-[14px] h-[12px]"><path d="M1 11V2H5L6 1H12V4" fill="#f3e9a0" stroke="#c9b532" /><path d="M1 11L3 4H14L12 11Z" fill="#dac845" /></svg>

const fieldLabel = "block h-[17px] leading-[20px]"

const Geoprocessing = () => (
    <aside className="flex flex-col w-[252px] shrink-0 border border-[#d3d3d3] border-t-4 border-t-[#c2c2c2] bg-[#f7f7f7] text-[11px] text-[#444]">
        <PaneHead title="Geoprocessing" />
        <div className="flex items-center justify-between h-[40px] pl-[6px] pr-[5px]">
            <button aria-label="Back" className="grid place-items-center size-[16px] rounded-full border border-[#555]"><ArrowLeft size={11} strokeWidth={2.200} /></button>
            <h3 className="text-[13px] leading-[18px]">Buffer</h3>
            <button aria-label="Add to model" className="grid place-items-center size-[16px] rounded-full border border-[#555]"><Plus size={13} strokeWidth={1.800} /></button>
        </div>
        <div className="flex items-center h-[35px] mx-[2px] pl-[9px] pr-[3px] bg-[#dcecf5]">
            <svg viewBox="0 0 12 12" className="size-[11px] shrink-0"><circle cx="6" cy="6" r="6" fill="#4b9fd3" /><path d="M6 2.500V4M6 5V9.500" stroke="#fff" strokeWidth="1.600" /></svg>
            <p className="flex-1 ml-[15px] leading-[13px] whitespace-nowrap">The <a href="#pairwise" className="text-[#1f5d2c]">Pairwise Buffer</a> tool provides<br />enhanced functionality or performance.</p>
            <button aria-label="Dismiss tip"><X size={12} strokeWidth={1.500} /></button>
        </div>
        <div className="flex items-center h-[22px] pl-[8px] pr-[5px] text-[12px]">
            <button className="h-[18px] mt-[2px] mr-[9px] border-b-2 border-[#0b5083] leading-[16px] font-semibold text-[#333]">Parameters</button>
            <button className="h-[18px] mt-[2px] border-b-2 border-transparent leading-[16px]">Environments</button>
            <button aria-label="Help" className="ml-auto text-[#3d8cc0]"><CircleHelp size={15} strokeWidth={1.800} fill="#e4f2fa" /></button>
        </div>
        <form className="flex flex-col pl-[15px] pr-[7px] pt-[6px]" onSubmit={e => e.preventDefault()}>
            <label htmlFor="input" className={fieldLabel}>Input Features</label>
            <div className="flex items-center">
                <Combo id="input" value="Watersheds_One" />
                <button aria-label="Browse input" className="ml-[7px]"><Folder /></button>
                <button aria-label="Edit features" className="flex items-center gap-[3px] ml-[10px] mr-[4px]">
                    <svg viewBox="0 0 12 12" className="size-[12px]"><path d="M0 12L1 9L8 2L10 4L3 11Z" fill="#d7bc35" /><path d="M8 2L10 0L12 2L10 4Z" fill="#555" /></svg>
                    <Caret small />
                </button>
            </div>
            <div className="flex items-center -ml-[14px]">
                <svg viewBox="0 0 12 12" className="size-[11px] mt-[3px]"><path d="M6 0L12 11H0Z" fill="#f3b67e" /><path d="M6 4V7.500M6 8.500V10" stroke="#333" strokeWidth="1.300" /></svg>
                <label htmlFor="output" className={`${fieldLabel} ml-[3px]`}>Output Feature Class</label>
            </div>
            <div className="flex items-center">
                <input id="output" defaultValue="Watersheds_One_Buffer1" className="flex-1 min-w-0 h-[19px] px-[4px] border border-[#a3a3a3] bg-white outline-none" />
                <button aria-label="Browse output" className="ml-[6px] mr-[3px]"><Folder /></button>
            </div>
            <div className="grid grid-cols-[110px_1fr] gap-x-[4px] gap-y-[2px] mt-[5px] items-center">
                <label htmlFor="distance" className="whitespace-nowrap">Distance [value or field]</label>
                <Combo name="Distance type" value="Linear Unit" tight />
                <input id="distance" defaultValue="5" className="w-full h-[19px] px-[2px] border border-[#a3a3a3] bg-white text-right outline-none" />
                <Combo name="Distance unit" value="Meters" tight />
            </div>
            {[["side", "Side Type", "Full"], ["method", "Method", "Planar"], ["dissolve", "Dissolve Type", "No Dissolve"]].map(([id, label, value]) => (
                <div key={id}>
                    <label htmlFor={id} className={fieldLabel}>{label}</label>
                    <Combo id={id} value={value} />
                </div>
            ))}
        </form>
        <button className="flex items-center h-[21px] w-[73px] mt-auto ml-auto mr-[5px] pl-[9px] pr-[3px] border border-[#555] bg-[#fdfdfd]">
            <svg viewBox="0 0 14 14" className="size-[15px]"><circle cx="7" cy="7" r="6.500" fill="#cfe9f7" stroke="#58a8d6" /><path d="M5 3.500L10.500 7L5 10.500Z" fill="#2c80b9" /></svg>
            <span className="ml-[6px]">Run</span><Caret small className="text-[#444] ml-auto" />
        </button>
        <div className="flex items-center h-[39px] mt-[6px] mx-[3px] mb-[2px] pl-[11px] pr-[5px] bg-[#e1eee0]">
            <svg viewBox="0 0 12 12" className="size-[11px]"><circle cx="6" cy="6" r="6" fill="#4f9a56" /><path d="M3 6L5.500 8.500L9 4" fill="none" stroke="#fff" strokeWidth="1.600" /></svg>
            <div className="flex-1 ml-[15px] leading-[17px]">
                <p>Buffer completed.</p>
                <a href="#details" className="text-[#4c7c55] mr-[5px]">View Details</a><a href="#history" className="text-[#4c7c55]">Open History</a>
            </div>
            <button aria-label="Dismiss message"><X size={12} strokeWidth={1.500} /></button>
        </div>
    </aside>
)

/* ---------- taskbar ---------- */

const apps: { name: string, art: ReactNode }[] = [
    { name: "Task View", art: <path d="M5 5V8H14V5M5 19V16H14V19M5 10H14V14H5ZM17.500 5V10M17.500 14V19M16 12H19" fill="none" stroke="#e6eaec" strokeWidth="1.300" /> },
    { name: "Edge", art: <>
        <circle cx="12" cy="12" r="10.500" fill="#1673c7" /><path d="M1.500 12Q2 2 12 1.500Q22 2 22.500 10Q22 16 15 15Q17 11 13 8Q8 6 1.500 12Z" fill="#39c1c7" /><path d="M12 1.500Q22 2 22.500 10Q22 16 15 15Q17 11 14 8Z" fill="#62d36f" />
        <path d="M10 11Q6 18 15 20Q19 20 21 17Q17 23 11 22Q5 18 10 11Z" fill="#12458f" />
    </> },
    { name: "File Explorer", art: <><path d="M2 3H10L12 5H22V20H2Z" fill="#e2a431" /><path d="M2 7H22V20H2Z" fill="#fbd467" /><path d="M6 20V13H18V20H15V16H9V20Z" fill="#3f8fcb" /></> },
    { name: "Store", art: <>
        <path d="M7 6V2.500H17V6" fill="none" stroke="#4db7ea" strokeWidth="1.800" /><path d="M2 5H22V20Q22 22 20 22H4Q2 22 2 20Z" fill="#f4f6f7" />
        <path d="M8 9H11.500V12.500H8Z" fill="#e6502e" /><path d="M12.500 9H16V12.500H12.500Z" fill="#7fba1e" /><path d="M8 13.500H11.500V17H8Z" fill="#2a9fe0" /><path d="M12.500 13.500H16V17H12.500Z" fill="#f5b51b" />
    </> },
    { name: "Mail", art: <><path d="M1 9L12 2L23 9V21H1Z" fill="#1467b0" /><path d="M4 8H20L12 15Z" fill="#e9f4fb" /><path d="M1 9L12 16L23 9V21H1Z" fill="#36a3e4" /><path d="M1 21L12 14L23 21Z" fill="#58c1f3" /></> },
    { name: "Firefox", art: <><circle cx="12" cy="13" r="9.500" fill="#f4513c" /><path d="M3 9L5 4L8 7L13 2Q16 5 19 6Q23 12 21 17Q18 23 12 22Q20 19 18 11Q14 6 9 9Z" fill="#fcb72b" /><circle cx="12" cy="13" r="4.500" fill="#8a48d0" /><path d="M6 12Q8 8 13 11Q9 12 10 15Z" fill="#ff8b2b" /></> },
    { name: "ArcGIS Pro", art: <><path d="M5 2H19L22 5V19L19 22H5L2 19V5Z" fill="#1768c5" /><circle cx="12" cy="12" r="7" fill="#1768c5" stroke="#fff" strokeWidth="2" /><path d="M7 9L12 7L13 10L10 12L11 16L8 14ZM14 12L18 11L15 16Z" fill="#fff" /></> },
]

const Taskbar = () => (
    <footer className="flex items-center h-[35px] shrink-0 bg-linear-to-r from-[#1e323b] to-[#1d2844] text-white text-[14px]">
        <button aria-label="Start" className="grid place-items-center w-[43px] h-full">
            <svg viewBox="0 0 16 16" className="size-[15px]"><path d="M0 2.500L7 1.500V7.500H0ZM8 1.300L16 0V7.500H8ZM0 8.500H7V14.500L0 13.500ZM8 8.500H16V16L8 14.700Z" fill="#fff" /></svg>
        </button>
        <label className="flex items-center gap-[9px] w-[305px] h-full pl-[10px] bg-[#f1f1f1] text-[#222]">
            <Search size={16} strokeWidth={1.500} className="-scale-x-100" />
            <input placeholder="Type here to search" className="flex-1 outline-none placeholder:text-[#444]" />
        </label>
        {apps.map(a => (
            <button key={a.name} aria-label={a.name} className={`grid place-items-center h-full ${a.name === "ArcGIS Pro" ? "w-[43px] bg-[#475b6a] border-b-2 border-[#6ba9d8]" : a.name === "Task View" ? "w-[43px]" : "w-[44px]"}`}>
                <svg viewBox="0 0 24 24" className="size-[22px]">{a.art}</svg>
            </button>
        ))}
        <div className="flex items-center ml-auto pr-[15px]">
            <span className="size-[16px] rounded-full bg-linear-to-b from-[#f6b526] to-[#ee7f1d]" />
            <span className="ml-[9px] text-[13px] whitespace-nowrap">65°F&nbsp; Sunny</span>
            <button aria-label="Hidden icons" className="ml-[12px]"><ChevronUp size={14} /></button>
            <svg viewBox="0 0 16 16" className="size-[15px] ml-[7px]" fill="none" stroke="#fff"><path d="M1 3L14 1.500V14L1 12.500ZM5 10V6H9M9 4.500V8H6" /><circle cx="12" cy="12.500" r="3.200" fill="#f29a2e" stroke="none" /></svg>
            <svg viewBox="0 0 16 16" className="size-[15px] ml-[6px]" fill="none" stroke="#fff"><path d="M5 5.500H14V12H3V9M14 7.500H15.500V10H14M0 4.500H5M1.500 2.500V6.500Q3 8 4.500 6.500V2.500" /><path d="M6 7.500H12V10H6Z" fill="#fff" /></svg>
            <svg viewBox="0 0 16 16" className="size-[15px] ml-[6px]" fill="none" stroke="#fff"><path d="M5 4.500H15V11H4V7.500M10 11V14M7 14H13M.5 2.500H4.500V6.500H.5Z" /></svg>
            <Volume2 size={15} strokeWidth={1.500} className="ml-[6px]" />
            <time className="flex flex-col items-center ml-[4px] text-[11px] leading-[16px]"><span>9:45 AM</span><span>6/28/2022</span></time>
            <button aria-label="Notifications, 1 new" className="ml-[12px]">
                <svg viewBox="0 0 22 24" className="w-[22px] h-[24px]"><path d="M1 3H15V14H8L5 17V14H1Z" fill="#fff" /><path d="M3 6H13M3 9H13M3 12H9" stroke="#1d2844" /><circle cx="14.500" cy="16" r="6.500" fill="#3a4152" stroke="#98a0ac" /><text x="14.500" y="20" textAnchor="middle" fontSize="10" fill="#fff">1</text></svg>
            </button>
        </div>
    </footer>
)

export default function App() {
    return (
        <div className="flex min-h-screen bg-black pl-[98px] pr-[99px] pb-[1px] font-['Lato','Open_Sans',sans-serif] [font-variant-ligatures:none] select-none">
            <div className="flex flex-col flex-1 min-w-0">
                <TitleBar />
                <Header />
                <Ribbon />
                <div className="flex flex-1 min-h-0 gap-[6px] pt-[5px] pb-[5px] pl-[6px] pr-[5px] bg-[#f0f0f0]">
                    <Contents />
                    <MapView />
                    <Geoprocessing />
                </div>
                <Taskbar />
            </div>
        </div>
    )
}
